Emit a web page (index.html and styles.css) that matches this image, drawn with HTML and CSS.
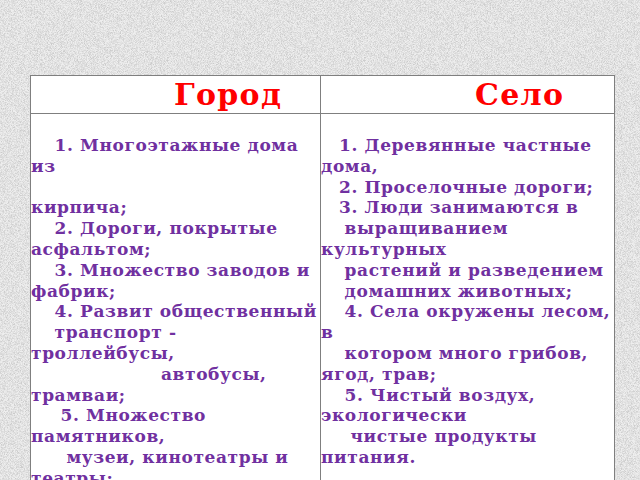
FILE: index.html
```html
<!DOCTYPE html>
<html lang="ru">
<head>
<meta charset="utf-8">
<title>Город и Село</title>
<link rel="stylesheet" href="styles.css">
</head>
<body>
<svg class="bg" width="640" height="480" aria-hidden="true">
  <defs>
    <filter id="noise" x="0" y="0" width="100%" height="100%">
      <feTurbulence type="fractalNoise" baseFrequency="1.3" numOctaves="2" seed="4"/>
      <feColorMatrix type="matrix" values="0 0 0 0 0.6  0 0 0 0 0.6  0 0 0 0 0.6  2.4 0 0 0 -0.85"/>
    </filter>
  </defs>
  <rect width="640" height="480" fill="#eeeeee"/>
  <rect width="640" height="480" filter="url(#noise)"/>
</svg>
<div class="table">
  <div class="cell head head-left">Город</div>
  <div class="cell head head-right">Село</div>
  <div class="cell body">
    <div class="line i4">1. Многоэтажные дома</div>
    <div class="line">из</div>
    <div class="line"></div>
    <div class="line">кирпича;</div>
    <div class="line i4">2. Дороги, покрытые</div>
    <div class="line">асфальтом;</div>
    <div class="line i4">3. Множество заводов и</div>
    <div class="line">фабрик;</div>
    <div class="line i4">4. Развит общественный</div>
    <div class="line i4">транспорт -</div>
    <div class="line">троллейбусы,</div>
    <div class="line i22">автобусы,</div>
    <div class="line">трамваи;</div>
    <div class="line i5">5. Множество</div>
    <div class="line">памятников,</div>
    <div class="line i6">музеи, кинотеатры и</div>
    <div class="line">театры;</div>
  </div>
  <div class="cell body">
    <div class="line i3">1. Деревянные частные</div>
    <div class="line">дома,</div>
    <div class="line i3">2. Проселочные дороги;</div>
    <div class="line i3">3. Люди занимаются в</div>
    <div class="line i4">выращиванием</div>
    <div class="line">культурных</div>
    <div class="line i4">растений и разведением</div>
    <div class="line i4">домашних животных;</div>
    <div class="line i4">4. Села окружены лесом,</div>
    <div class="line">в</div>
    <div class="line i4">котором много грибов,</div>
    <div class="line">ягод, трав;</div>
    <div class="line i4">5. Чистый воздух,</div>
    <div class="line">экологически</div>
    <div class="line i5">чистые продукты</div>
    <div class="line">питания.</div>
  </div>
</div>
</body>
</html>
```
FILE: styles.css
```css
html, body {
  margin: 0;
  padding: 0;
  width: 640px;
  height: 480px;
  overflow: hidden;
}

body {
  background: #e8e8e8;
  font-family: "DejaVu Serif", "Liberation Serif", serif;
  font-weight: bold;
}

.bg {
  position: fixed;
  left: 0;
  top: 0;
  z-index: -1;
}

.table {
  display: grid;
  grid-template-columns: 290px 294px;
  grid-template-rows: 38px 420px;
  width: 585px;
  box-sizing: border-box;
  margin: 75px 0 0 30px;
  border-left: 1px solid #7f7f7f;
  border-top: 1px solid #7f7f7f;
  background: #ffffff;
}

.cell {
  box-sizing: border-box;
  border-right: 1px solid #7f7f7f;
  border-bottom: 1px solid #7f7f7f;
  background: #ffffff;
}

.head {
  font-size: 30px;
  line-height: 37px;
  letter-spacing: 1.3px;
  color: #ff0000;
  white-space: pre;
}

.head-left {
  padding-left: 143px;
}

.head-right {
  padding-left: 154px;
}

.body {
  padding-top: 21px;
  font-size: 17px;
  line-height: 20.8px;
  letter-spacing: 0.6px;
  color: #7030a0;
}

.line {
  white-space: pre;
  height: 20.8px;
}

.i3 { padding-left: 18px; }
.i4 { padding-left: 23.6px; }
.i5 { padding-left: 29.5px; }
.i6 { padding-left: 35.4px; }
.i22 { padding-left: 130px; }
```
